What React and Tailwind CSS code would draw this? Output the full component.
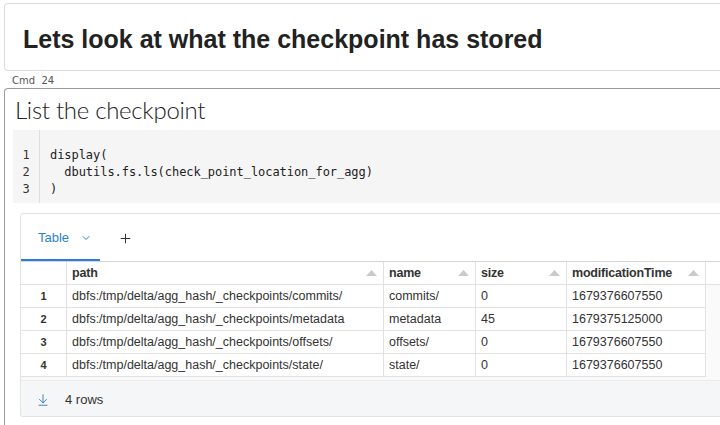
import { ChevronDown, Plus, ArrowDownToLine } from 'lucide-react'

const rows = [
  ['dbfs:/tmp/delta/agg_hash/_checkpoints/commits/', 'commits/', '0', '1679376607550'],
  ['dbfs:/tmp/delta/agg_hash/_checkpoints/metadata', 'metadata', '45', '1679375125000'],
  ['dbfs:/tmp/delta/agg_hash/_checkpoints/offsets/', 'offsets/', '0', '1679376607550'],
  ['dbfs:/tmp/delta/agg_hash/_checkpoints/state/', 'state/', '0', '1679376607550'],
]

const cols = ['path', 'name', 'size', 'modificationTime']

function SortArrow() {
  return (
    <svg width="11" height="6" viewBox="0 0 11 6" className="shrink-0">
      <path d="M5.5 0 L11 6 L0 6 Z" fill="#cacaca" />
    </svg>
  )
}

export default function App() {
  return (
    <div className="w-[720px] h-[425px] overflow-hidden bg-white text-[#333] font-['Liberation_Sans',Arial,sans-serif]">
      <div className="h-[3px] overflow-hidden">
        <div className="ml-[12px] mt-[-8px] text-[10px] leading-[10px] text-[#666]">Cmd 23</div>
      </div>

      {/* markdown cell */}
      <div className="ml-[4px] h-[68px] border border-r-0 border-[#dcdcdc] rounded-l-[4px] flex items-center pl-[18px]">
        <h1 className="text-[25px] font-bold text-[#222] mt-[6px]">Lets look at what the checkpoint has stored</h1>
      </div>

      <div className="h-[17px] pl-[12px] pt-[4px] text-[10px] leading-[11px] text-[#555] font-['DejaVu_Sans',sans-serif]">Cmd&nbsp;&nbsp;24</div>

      {/* code cell */}
      <div className="ml-[4px] h-[340px] border-[1.5px] border-r-0 border-[#9a9a9a] rounded-l-[4px] pl-[8px]">
        <div className="h-[41px] flex items-center pl-[2px]">
          <span className="text-[24px] font-light text-[#222] font-['Lato',sans-serif] tracking-[-0.3px]">List the checkpoint</span>
        </div>

        <div className="h-[73px] bg-[#f5f5f5] flex font-['DejaVu_Sans_Mono',monospace] text-[12px] leading-[17px] text-[#222]">
          <div className="w-[27px] border-r border-[#dedede] pt-[17px] text-center text-[#333]">
            <div>1</div>
            <div>2</div>
            <div>3</div>
          </div>
          <div className="pl-[10px] pt-[17px] whitespace-pre tracking-[-0.05px]">
            <div>display(</div>
            <div>  dbutils.fs.ls(check_point_location_for_agg)</div>
            <div>)</div>
          </div>
        </div>

        {/* results */}
        <div className="mt-[10px] ml-[7px] h-[204px] border border-r-0 border-[#e3e3e3] rounded-l-[3px] bg-[#fafafa] overflow-hidden">
          <div className="h-[47px] bg-white flex items-end">
            <div className="w-[79px] h-[47px] border-b-2 border-[#2a7fd4] flex items-center pl-[17px] gap-[11px] text-[#2a7fd4] text-[13px]">
              <span className="mt-[2px]">Table</span>
              <ChevronDown size={12} strokeWidth={2} className="mt-[2px]" />
            </div>
            <div className="h-[47px] flex items-center pl-[18px] text-[#333]">
              <Plus size={15} strokeWidth={1.6} className="mt-[2px]" />
            </div>
          </div>

          <div className="grid grid-cols-[46px_317px_92px_91px_139px_1fr] text-[12.5px] border-t border-[#d6d6d6]">
            <div className="h-[23px] bg-white border-b border-r border-[#e2e2e2]" />
            {cols.map((c) => (
              <div key={c} className="h-[23px] bg-white border-b border-r border-[#e2e2e2] flex items-center justify-between pl-[5px] pr-[6px] font-bold text-[#333] tracking-[-0.2px]">
                <span>{c}</span>
                <SortArrow />
              </div>
            ))}
            <div className="h-[23px] bg-white border-b border-[#e2e2e2]" />

            {rows.map((r, i) => (
              <div key={i} className="contents">
                <div className="h-[23px] bg-white border-b border-r border-[#e2e2e2] flex items-center justify-center text-[11px] font-bold text-[#333]">{i + 1}</div>
                {r.map((v, j) => (
                  <div key={j} className="h-[23px] bg-white border-b border-r border-[#e2e2e2] flex items-center pl-[5px] text-[#333] whitespace-nowrap">{v}</div>
                ))}
                <div className="h-[23px]" />
              </div>
            ))}
          </div>

          <div className="mt-[3px] h-[38px] bg-[#f5f6f7] border-t border-[#ececec] flex items-center pl-[15px] gap-[15px] text-[13px] text-[#333]">
            <ArrowDownToLine size={14} strokeWidth={1.6} className="text-[#3b7cc0]" />
            <span>4 rows</span>
          </div>
        </div>
      </div>
    </div>
  )
}
